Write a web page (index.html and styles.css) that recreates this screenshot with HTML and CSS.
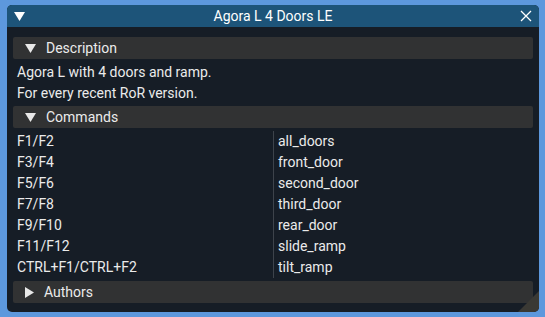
FILE: index.html
```html
<!DOCTYPE html>
<html>
<head>
<meta charset="utf-8">
<link rel="stylesheet" href="styles.css">
</head>
<body>
<div class="window">
  <div class="titlebar">
    <svg class="tri title-tri" width="11" height="9" viewBox="0 0 11 9"><polygon points="0,0 11,0 5.5,9" fill="#fff"/></svg>
    <span class="title">Agora L 4 Doors LE</span>
    <svg class="close" width="12" height="12" viewBox="0 0 12 12"><path d="M1 1 L11 11 M11 1 L1 11" stroke="#fff" stroke-width="1.3"/></svg>
  </div>
  <div class="content">
    <div class="header"><svg class="tri" width="11" height="9" viewBox="0 0 11 9"><polygon points="0,0 11,0 5.5,9" fill="#e8e8e8"/></svg><span>Description</span></div>
    <div class="line first">Agora L with 4 doors and ramp.</div>
    <div class="line">For every recent RoR version.</div>
    <div class="header"><svg class="tri" width="11" height="9" viewBox="0 0 11 9"><polygon points="0,0 11,0 5.5,9" fill="#e8e8e8"/></svg><span>Commands</span></div>
    <div class="table">
      <div class="cell">F1/F2</div><div class="cell right">all_doors</div>
      <div class="cell">F3/F4</div><div class="cell right">front_door</div>
      <div class="cell">F5/F6</div><div class="cell right">second_door</div>
      <div class="cell">F7/F8</div><div class="cell right">third_door</div>
      <div class="cell">F9/F10</div><div class="cell right">rear_door</div>
      <div class="cell">F11/F12</div><div class="cell right">slide_ramp</div>
      <div class="cell">CTRL+F1/CTRL+F2</div><div class="cell right">tilt_ramp</div>
    </div>
    <div class="header"><svg class="tri" width="9" height="11" viewBox="0 0 9 11"><polygon points="0,0 9,5.5 0,11" fill="#e8e8e8"/></svg><span>Authors</span></div>
  </div>
  <div class="grip"></div>
</div>
</body>
</html>
```
FILE: styles.css
```css
html, body {
  margin: 0;
  padding: 0;
  background: #5d98dd;
  width: 545px;
  height: 317px;
  overflow: hidden;
  font-family: Roboto, "Noto Sans", sans-serif;
  font-size: 14px;
  color: #ebebeb;
}
.window {
  position: relative;
  margin: 5px 0 0 7px;
  width: 532px;
  height: 307px;
  background: #161d26;
  border-radius: 5px;
  overflow: hidden;
  display: flex;
  flex-direction: column;
}
.titlebar {
  height: 22px;
  background: #1d5479;
  display: flex;
  align-items: center;
  position: relative;
  flex: none;
}
.title-tri {
  margin-left: 7px;
}
.title {
  position: absolute;
  left: 0;
  right: 0;
  text-align: center;
  color: #ffffff;
  line-height: 22px;
}
.close {
  margin-left: auto;
  margin-right: 7px;
}
.content {
  padding: 10px 6px 0 6px;
  display: flex;
  flex-direction: column;
  gap: 4px;
}
.header {
  height: 22px;
  background: #313233;
  border-radius: 2px;
  display: flex;
  align-items: center;
  padding-left: 12px;
}
.header .tri {
  margin-right: 10px;
}
.header span {
  line-height: 22px;
}
.line {
  padding-left: 4px;
  line-height: 17px;
  height: 17px;
}
.line.first {
  margin-top: 1px;
}
.table {
  display: grid;
  grid-template-columns: 260px 260px;
  grid-auto-rows: 21px;
  margin-top: -1px;
  margin-bottom: -1px;
}
.cell {
  padding-left: 4px;
  line-height: 21px;
}
.cell.right {
  border-left: 1px solid #3d434b;
  padding-left: 4px;
}
.grip {
  position: absolute;
  right: 0;
  bottom: 0;
  width: 0;
  height: 0;
  border-style: solid;
  border-width: 0 0 21px 21px;
  border-color: transparent transparent #3a3934 transparent;
}
```
